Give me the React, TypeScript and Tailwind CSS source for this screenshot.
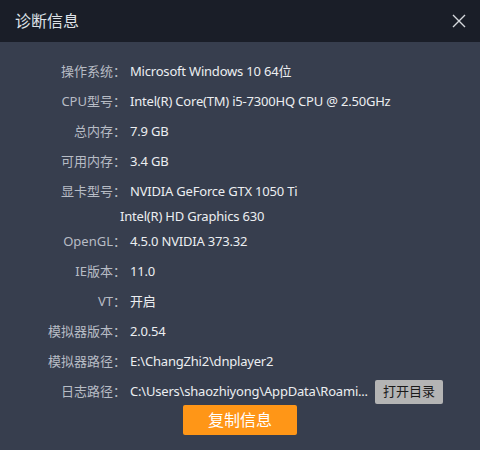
import React from "react";

const rows: { label: string; value: string; extra?: string }[] = [
  { label: "操作系统：", value: "Microsoft Windows 10 64位" },
  { label: "CPU型号：", value: "Intel(R) Core(TM) i5-7300HQ CPU @ 2.50GHz" },
  { label: "总内存：", value: "7.9 GB" },
  { label: "可用内存：", value: "3.4 GB" },
  { label: "显卡型号：", value: "NVIDIA GeForce GTX 1050 Ti", extra: "Intel(R) HD Graphics 630" },
  { label: "OpenGL：", value: "4.5.0 NVIDIA 373.32" },
  { label: "IE版本：", value: "11.0" },
  { label: "VT：", value: "开启" },
  { label: "模拟器版本：", value: "2.0.54" },
  { label: "模拟器路径：", value: "E:\\ChangZhi2\\dnplayer2" },
];

export default function App() {
  const font = { fontFamily: '"Noto Sans", "Noto Sans CJK SC", sans-serif' };
  return (
    <div className="w-[480px] h-[450px] bg-[#373e4e] flex flex-col" style={font}>
      <div className="h-[42px] bg-[#1a1e28] flex items-center justify-between pl-[15px] pr-[14px]">
        <span className="text-[16px] text-[#dfe3e8] leading-none">诊断信息</span>
        <svg width="14" height="14" viewBox="0 0 14 14">
          <path d="M1 1 L13 13 M13 1 L1 13" stroke="#d6d9de" strokeWidth="1.4" />
        </svg>
      </div>
      <div className="flex flex-col pt-[15px]">
        {rows.map((r) => (
          <div key={r.label} className="flex flex-col">
            <div className="h-[30px] flex items-center text-[13px]">
              <span className="w-[126px] text-right text-[#b7bcc5]">{r.label}</span>
              <span className="ml-[4px] text-[#eceef1] whitespace-nowrap tracking-[-0.2px]">{r.value}</span>
            </div>
            {r.extra && (
              <div className="h-[20px] flex items-center text-[13px] pl-[120px] text-[#eceef1] tracking-[-0.2px]">
                {r.extra}
              </div>
            )}
          </div>
        ))}
        <div className="h-[30px] flex items-center text-[13px]">
          <span className="w-[126px] text-right text-[#b7bcc5]">日志路径：</span>
          <span className="ml-[4px] text-[#eceef1] whitespace-nowrap w-[236px] tracking-[-0.2px]">
            C:\Users\shaozhiyong\AppData\Roami...
          </span>
          <button className="ml-[9px] w-[68px] h-[24px] bg-[#b4b4b4] rounded-[2px] text-[13px] text-[#1a1a1a] flex items-center justify-center">
            打开目录
          </button>
        </div>
        <div className="flex justify-center mt-[-2px]">
          <button className="w-[114px] h-[30px] bg-[#ff9617] rounded-[2px] text-[16px] text-white flex items-center justify-center">
            复制信息
          </button>
        </div>
      </div>
    </div>
  );
}
